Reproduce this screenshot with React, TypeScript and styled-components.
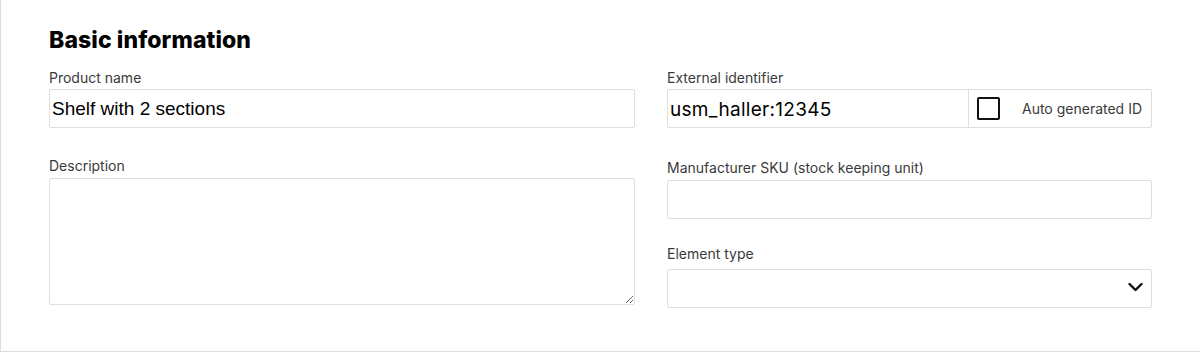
import styled, { createGlobalStyle } from "styled-components";

const GlobalStyle = createGlobalStyle`
  html, body {
    margin: 0;
    padding: 0;
    background: #ffffff;
  }
  body {
    font-family: Inter, "Noto Sans", sans-serif;
    color: #222;
  }
  * {
    box-sizing: border-box;
  }
`;

const Card = styled.section`
  width: 1200px;
  background: #ffffff;
  border-left: 1px solid #dddddd;
  border-bottom: 1px solid #dddddd;
  padding: 26px 48px 43px 48px;
`;

const Heading = styled.h2`
  margin: 0 0 14px 0;
  font-size: 23px;
  line-height: 28px;
  font-weight: 800;
  color: #000;
  letter-spacing: 0.1px;
`;

const Grid = styled.div`
  display: grid;
  grid-template-columns: 586px 485px;
  column-gap: 32px;
  align-items: start;
`;

const Column = styled.div`
  display: flex;
  flex-direction: column;
`;

const Field = styled.div<{ $top?: number }>`
  display: flex;
  flex-direction: column;
  margin-top: ${(p) => p.$top ?? 0}px;
`;

const Label = styled.label<{ $space?: number }>`
  font-size: 14px;
  line-height: 20px;
  color: #3a3a3a;
  margin-bottom: ${(p) => p.$space ?? 1}px;
`;

const TextInput = styled.input`
  height: 39px;
  width: 100%;
  border: 1px solid #dedede;
  border-radius: 2px;
  padding: 0 2px;
  font-family: "Liberation Sans", Arial, sans-serif;
  font-size: 19px;
  color: #000;
  background: #fff;
  outline: none;
`;

const TextArea = styled.textarea`
  height: 127px;
  width: 100%;
  border: 1px solid #dedede;
  border-radius: 2px;
  padding: 4px 3px;
  font-family: "Liberation Sans", Arial, sans-serif;
  font-size: 19px;
  resize: vertical;
  outline: none;
`;

const Group = styled.div`
  display: flex;
  height: 39px;
  border: 1px solid #dedede;
  border-radius: 2px;
  overflow: hidden;
`;

const GroupInput = styled.input`
  flex: 1;
  min-width: 0;
  border: none;
  padding: 2px 2px 0 2px;
  font-family: Inter, "Noto Sans", sans-serif;
  font-size: 19px;
  letter-spacing: 0.3px;
  color: #000;
  outline: none;
  background: transparent;
`;

const Addon = styled.label`
  width: 183px;
  flex: none;
  display: flex;
  align-items: center;
  justify-content: space-between;
  border-left: 1px solid #dedede;
  padding: 0 9px 0 8px;
  font-size: 14px;
  color: #3a3a3a;
  cursor: pointer;
`;

const Box = styled.span`
  width: 23px;
  height: 23px;
  border: 2.5px solid #111;
  border-radius: 2px;
  background: #fff;
`;

const SelectWrap = styled.div`
  position: relative;
  height: 39px;
`;

const Select = styled.select`
  appearance: none;
  width: 100%;
  height: 39px;
  border: 1px solid #dedede;
  border-radius: 2px;
  background: #fff;
  padding: 0 30px 0 4px;
  font-family: Inter, "Noto Sans", sans-serif;
  font-size: 16px;
  outline: none;
`;

const Chevron = styled.svg`
  position: absolute;
  right: 9px;
  top: 13px;
  pointer-events: none;
`;

export default function App() {
  return (
    <>
      <GlobalStyle />
      <Card>
        <Heading>Basic information</Heading>
        <Grid>
          <Column>
            <Field>
              <Label>Product name</Label>
              <TextInput defaultValue="Shelf with 2 sections" />
            </Field>
            <Field $top={28}>
              <Label $space={2}>Description</Label>
              <TextArea />
            </Field>
          </Column>
          <Column>
            <Field>
              <Label>External identifier</Label>
              <Group>
                <GroupInput defaultValue="usm_haller:12345" />
                <Addon>
                  <Box />
                  <span>Auto generated ID</span>
                </Addon>
              </Group>
            </Field>
            <Field $top={30}>
              <Label $space={2}>Manufacturer SKU (stock keeping unit)</Label>
              <TextInput />
            </Field>
            <Field $top={25}>
              <Label $space={5}>Element type</Label>
              <SelectWrap>
                <Select defaultValue="">
                  <option value=""></option>
                </Select>
                <Chevron width="15" height="10" viewBox="0 0 15 10" fill="none">
                  <path
                    d="M1.5 2 L7.5 8 L13.5 2"
                    stroke="#111"
                    strokeWidth="2.4"
                    strokeLinecap="round"
                    strokeLinejoin="round"
                  />
                </Chevron>
              </SelectWrap>
            </Field>
          </Column>
        </Grid>
      </Card>
    </>
  );
}
